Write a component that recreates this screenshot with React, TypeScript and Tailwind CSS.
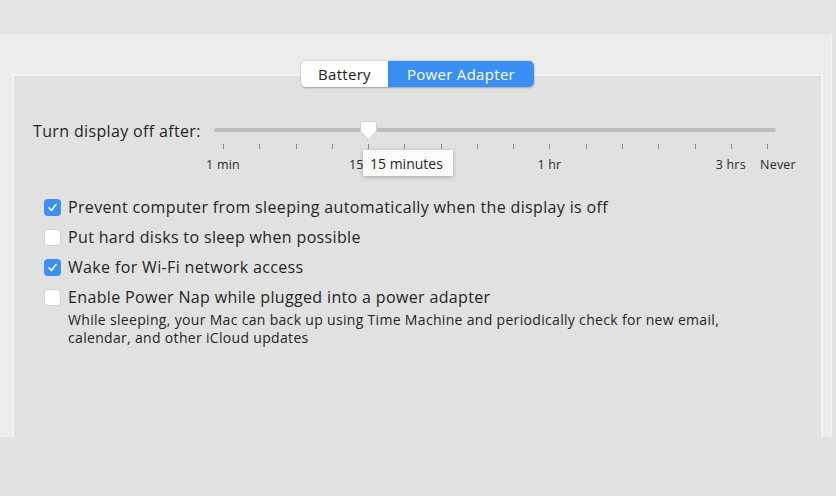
const font = { fontFamily: '"Open Sans", "Noto Sans", Arial, sans-serif' };

const ticks = Array.from({ length: 16 }, (_, i) => 9 + i * 36.27);

const labels = [
  { text: "1 min", x: 9 + 0 * 36.27 },
  { text: "1 hr", x: 9 + 9 * 36.27 },
  { text: "3 hrs", x: 9 + 14 * 36.27 },
  { text: "Never", x: 564 },
];

function Checkbox({ checked }: { checked: boolean }) {
  if (checked) {
    return (
      <div className="flex h-[17px] w-[17px] shrink-0 items-center justify-center rounded-[4px] bg-[#3d8ef5]">
        <svg width="11" height="11" viewBox="0 0 11 11" fill="none">
          <path d="M2 5.8 L4.4 8.4 L9 2.4" stroke="#fff" strokeWidth="1.6" strokeLinecap="round" strokeLinejoin="round" />
        </svg>
      </div>
    );
  }
  return <div className="h-[17px] w-[17px] shrink-0 rounded-[4px] border border-[#d2d2d2] bg-white" />;
}

function Option({ checked, label }: { checked: boolean; label: string }) {
  return (
    <div className="flex h-[30px] items-center gap-[7px]">
      <Checkbox checked={checked} />
      <span className="text-[16px] tracking-[0.35px] text-[#252525]">{label}</span>
    </div>
  );
}

function Slider() {
  return (
    <div className="relative h-[60px] w-[562px]">
      <div className="absolute left-0 right-0 top-[9px] h-[4px] rounded-full bg-[#bdbdbd]" />
      {ticks.map((x, i) => (
        <div key={i} className="absolute top-[25px] h-[5px] w-px bg-[#8a8a8a]" style={{ left: x }} />
      ))}
      {labels.map((l) => (
        <div
          key={l.text}
          className="absolute top-[37px] -translate-x-1/2 whitespace-nowrap text-[12.5px] tracking-[0.2px] text-[#2a2a2a]"
          style={{ left: l.x }}
        >
          {l.text}
        </div>
      ))}
      {/* the "15 min" label, mostly hidden under the tooltip */}
      <div className="absolute left-[135px] top-[37px] text-[12.5px] text-[#2a2a2a]">15</div>
      {/* thumb */}
      <svg className="absolute left-[146px] top-[2px]" width="17" height="20" viewBox="0 0 17 20">
        <path
          d="M3 0.5 H14 A2.5 2.5 0 0 1 16.5 3 V10 L8.5 19 L0.5 10 V3 A2.5 2.5 0 0 1 3 0.5 Z"
          fill="#fff"
          stroke="#cfcfcf"
          strokeWidth="1"
        />
      </svg>
      {/* tooltip */}
      <div className="absolute left-[149px] top-[31px] flex h-[26px] w-[90px] items-center bg-[#fbfbfb] pl-[7px] text-[14px] text-[#1f1f1f] shadow-[0_1px_4px_rgba(0,0,0,0.28)]">
        15 minutes
      </div>
    </div>
  );
}

export default function App() {
  return (
    <div className="flex h-[496px] w-[836px] flex-col bg-[#e2e2e2]" style={font}>
      <div className="h-[34px] shrink-0 bg-[#e3e3e3]" />
      <div className="mr-[4px] flex h-[403px] flex-col border-r border-[#f4f4f4] bg-[#ececec] pt-[27px]">
        <div className="relative z-10 -mb-[13px] flex justify-center pl-[4px]">
          <div className="flex h-[26px] overflow-hidden rounded-[5px] text-[15px] tracking-[0.3px] shadow-[0_0.5px_2px_rgba(0,0,0,0.3)]">
            <div className="flex w-[87px] items-center justify-center bg-white text-[#1c1c1c]">Battery</div>
            <div className="flex w-[146px] items-center justify-center bg-[#3b8ef4] text-white">Power Adapter</div>
          </div>
        </div>
        <div className="ml-[12px] mr-[8px] flex flex-1 flex-col border-l-2 border-t-2 border-r-2 border-[#f3f3f3] bg-[#e1e1e1] pl-[19px] pt-[43px]">
          <div className="flex items-start">
            <div className="w-[181px] text-[16px] tracking-[0.35px] text-[#252525]">Turn display off after:</div>
            <Slider />
          </div>
          <div className="mt-[13px] flex flex-col pl-[11px]">
            <Option checked label="Prevent computer from sleeping automatically when the display is off" />
            <Option checked={false} label="Put hard disks to sleep when possible" />
            <Option checked label="Wake for Wi-Fi network access" />
            <Option checked={false} label="Enable Power Nap while plugged into a power adapter" />
            <div className="-mt-[1px] pl-[24px] text-[14px] leading-[18px] tracking-[0.32px] text-[#252525]">
              While sleeping, your Mac can back up using Time Machine and periodically check for new email,
              <br />
              calendar, and other iCloud updates
            </div>
          </div>
        </div>
      </div>
    </div>
  );
}
